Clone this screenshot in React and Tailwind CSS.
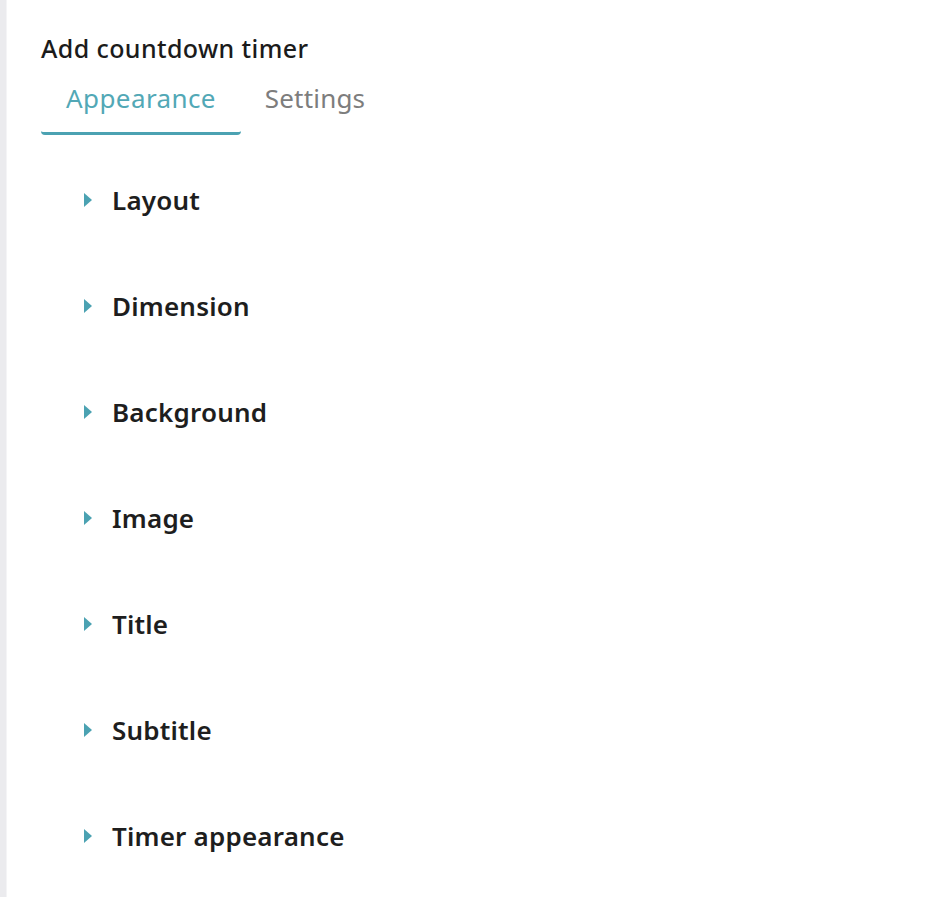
import React, { useState } from 'react';

const SECTIONS = [
  'Layout',
  'Dimension',
  'Background',
  'Image',
  'Title',
  'Subtitle',
  'Timer appearance',
];

const Caret = () => (
  <svg width="8" height="14" viewBox="0 0 8 14" className="shrink-0">
    <path d="M0 0 L8 7 L0 14 Z" fill="#4ba2b2" />
  </svg>
);

const App = () => {
  const [tab, setTab] = useState('appearance');

  return (
    <div
      className="flex min-h-screen bg-white text-[#1e1e1e]"
      style={{ fontFamily: '"Noto Sans", Lato, sans-serif' }}
    >
      <div className="w-[7px] shrink-0 bg-[#ebebee] border-r border-[#f4f4f6]" />
      <div className="flex-1 pl-[34px] pt-[33px]">
        <h1 className="text-[25px] leading-[30px] font-medium tracking-[0.4px] text-[#1b1b1b]">Add countdown timer</h1>

        <div className="flex mt-[20px]">
          <button
            onClick={() => setTab('appearance')}
            className={`w-[200px] pb-[19px] text-[26px] leading-[30px] tracking-[0.4px] text-center rounded-sm border-b-[3px] ${
              tab === 'appearance' ? 'text-[#52a8b6] border-[#4ba2b2]' : 'text-[#7d7d7d] border-transparent'
            }`}
          >
            Appearance
          </button>
          <button
            onClick={() => setTab('settings')}
            className={`w-[148px] pb-[19px] text-[26px] leading-[30px] tracking-[0.2px] text-center border-b-[3px] ${
              tab === 'settings' ? 'text-[#52a8b6] border-[#4ba2b2]' : 'text-[#7d7d7d] border-transparent'
            }`}
          >
            Settings
          </button>
        </div>

        <div className="flex flex-col pl-[43px] pt-[50px] gap-[76px]">
          {SECTIONS.map((s) => (
            <button key={s} className="flex items-center gap-[20px] h-[30px] text-left">
              <Caret />
              <span className="text-[26px] font-semibold leading-[30px] tracking-[0.2px] text-[#1e1e1e]">{s}</span>
            </button>
          ))}
        </div>
      </div>
    </div>
  );
};

export default App;
